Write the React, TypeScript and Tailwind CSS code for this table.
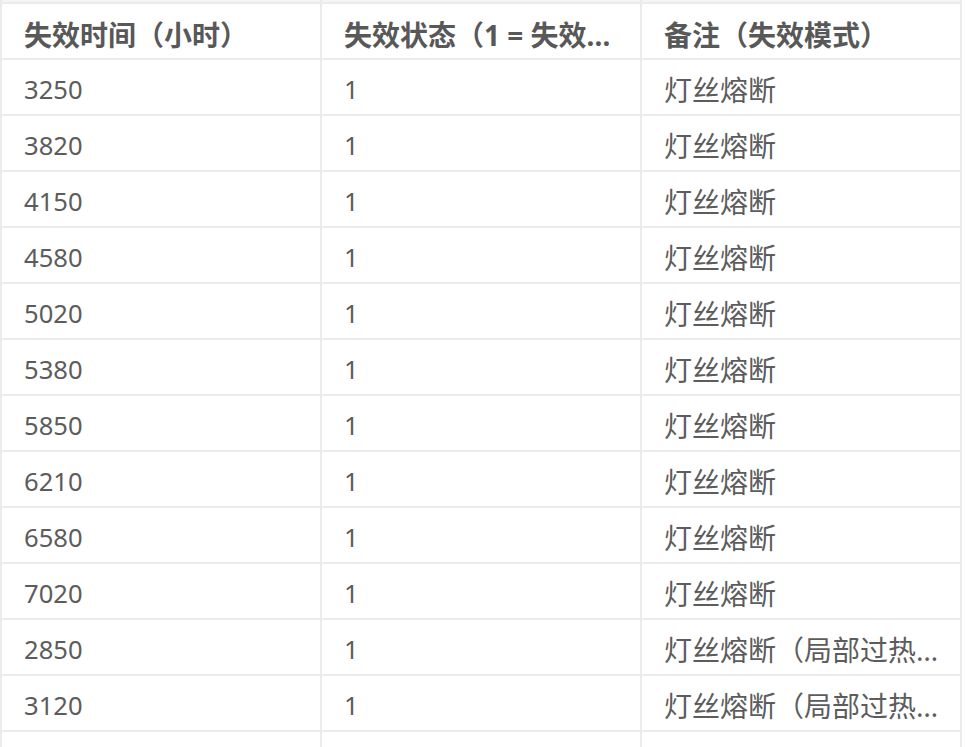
const rows: [string, string, string][] = [
  ["3250", "1", "灯丝熔断"],
  ["3820", "1", "灯丝熔断"],
  ["4150", "1", "灯丝熔断"],
  ["4580", "1", "灯丝熔断"],
  ["5020", "1", "灯丝熔断"],
  ["5380", "1", "灯丝熔断"],
  ["5850", "1", "灯丝熔断"],
  ["6210", "1", "灯丝熔断"],
  ["6580", "1", "灯丝熔断"],
  ["7020", "1", "灯丝熔断"],
  ["2850", "1", "灯丝熔断（局部过热导致）"],
  ["3120", "1", "灯丝熔断（局部过热导致）"],
  ["", "", ""],
];

const headers = ["失效时间（小时）", "失效状态（1 = 失效，0 = 截尾）", "备注（失效模式）"];

function Cell({
  children,
  bold,
  cjk,
}: {
  children?: React.ReactNode;
  bold?: boolean;
  cjk?: boolean;
}) {
  return (
    <div
      className={
        "flex w-[320px] shrink-0 items-center overflow-hidden border-r-2 border-[#ebebeb] pl-[22px] pr-[14px] " +
        (bold ? "pt-[8px] font-bold text-[#585858] " : "pt-[5px] text-[#5c5c5c] ") +
        (cjk ? "text-[28px]" : "text-[25.6px]")
      }
    >
      <span className="block w-full truncate">{children}</span>
    </div>
  );
}

export default function App() {
  return (
    <div
      className="h-[747px] w-[965px] overflow-hidden bg-white leading-none"
      style={{ fontFamily: '"Noto Sans", "Noto Sans CJK SC", sans-serif' }}
    >
      <div className="w-[962px] border-l-2 border-[#ebebeb]">
        <div className="flex h-[4px] border-b-2 border-[#ebebeb] bg-[#f3f4f6]">
          <div className="w-[320px] border-r-2 border-[#ebebeb]" />
          <div className="w-[320px] border-r-2 border-[#ebebeb]" />
          <div className="w-[320px] border-r-2 border-[#ebebeb]" />
        </div>
        <div className="flex h-[56px] border-b-2 border-[#ebebeb]">
          {headers.map((h) => (
            <Cell key={h} bold cjk>
              {h}
            </Cell>
          ))}
        </div>
        {rows.map((r, i) => (
          <div key={i} className="flex h-[56px] border-b-2 border-[#ebebeb]">
            <Cell>{r[0]}</Cell>
            <Cell>{r[1]}</Cell>
            <Cell cjk>{r[2]}</Cell>
          </div>
        ))}
      </div>
    </div>
  );
}
